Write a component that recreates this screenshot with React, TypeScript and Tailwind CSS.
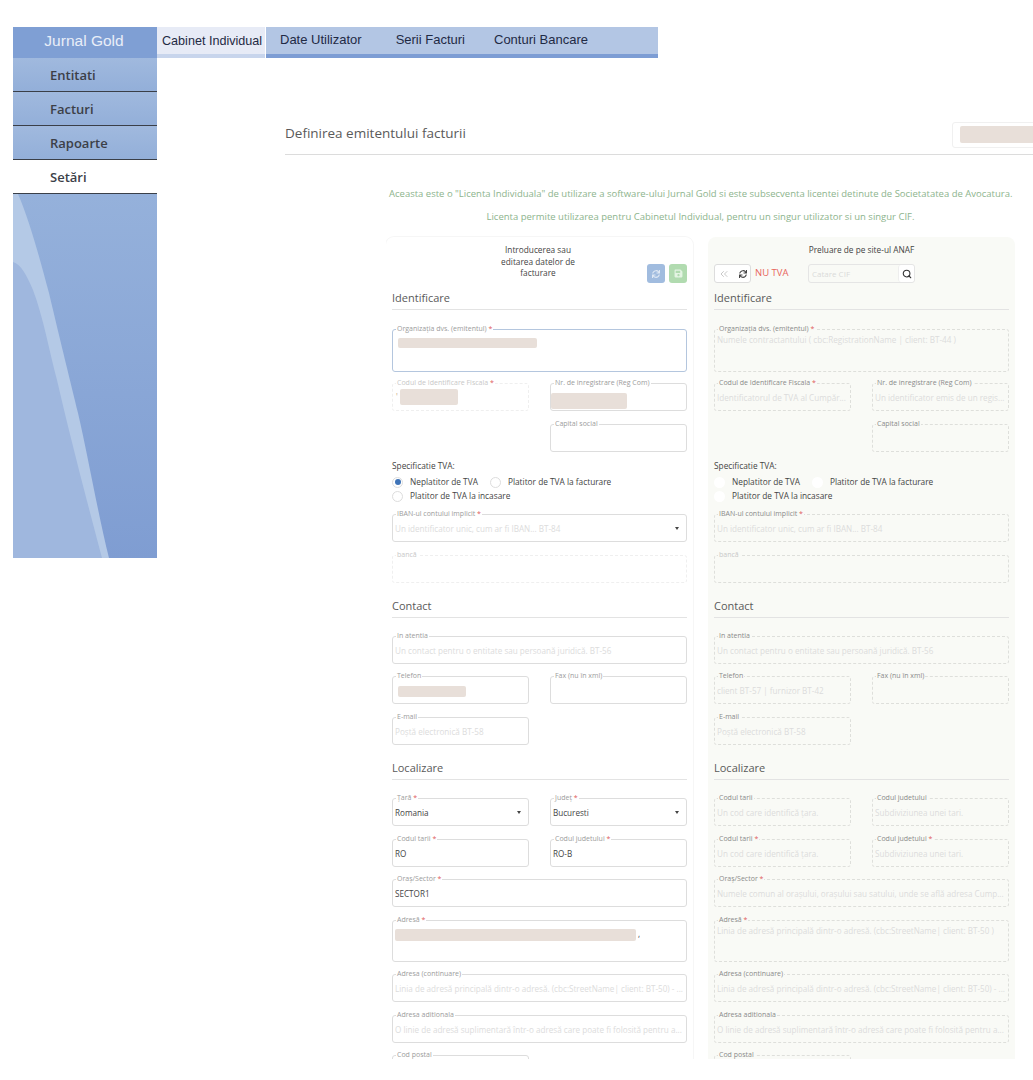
import React from 'react';
import { ChevronsLeft, Search } from 'lucide-react';
import { FaSave, FaSync } from 'react-icons/fa';

const sans = "font-['Open_Sans',sans-serif]";
const arial = "font-['Liberation_Sans',sans-serif]";

const Blob = ({ className }: { className: string }) => (
  <span className={`absolute rounded-[2px] bg-[#e8dfd9] ${className}`} />
);

type FieldProps = {
  label: string;
  required?: boolean;
  value?: string;
  placeholder?: string;
  dashed?: boolean;
  select?: boolean;
  focused?: boolean;
  labelMuted?: boolean;
  tall?: boolean;
  right?: boolean;
  className?: string;
  children?: React.ReactNode;
};

const Field = ({ label, required, value, placeholder, dashed, select, focused, labelMuted, tall, right, className = 'h-[28px]', children }: FieldProps) => {
  const line = dashed ? (right ? 'border-dashed border-[#dedfdb]' : 'border-dashed border-[#efefef]') : focused ? 'border-[#b4c6de]' : 'border-[#dddddd]';
  const labelColor = labelMuted ? 'text-[#c8c8c8]' : right ? 'text-[#8a8a8a]' : 'text-[#9c9c9c]';
  return (
    <div className={`relative rounded-[3px] border px-[2px] text-[8.15px] leading-[14px] ${tall ? 'pt-[3px]' : 'pt-[7px]'} ${sans} ${line} ${className}`}>
      <label className={`absolute -top-[5px] left-[3px] px-px text-[7px] leading-[8px] whitespace-nowrap ${right ? 'bg-[#f9faf6]' : 'bg-white'} ${labelColor}`}>
        {label}
        {required && <span className="text-[#e05a5a]"> *</span>}
      </label>
      {value && <div className="truncate text-[#444444]">{value}</div>}
      {placeholder && <div className="truncate text-[#dcdcdc]">{placeholder}</div>}
      {select && <span className="absolute right-[7px] top-[12px] border-x-[2.5px] border-t-[3px] border-x-transparent border-t-[#444444]" />}
      {children}
    </div>
  );
};

const Section = ({ title, className = '' }: { title: string; className?: string }) => (
  <div className={`border-b border-[#e3e3e3] pb-[4px] text-[11px] leading-[15px] text-[#5a5a5a] ${sans} ${className}`}>{title}</div>
);

const Radio = ({ label, checked, right }: { label: string; checked?: boolean; right?: boolean }) => (
  <span className="flex items-center gap-[7px]">
    <span className={`flex h-[11px] w-[11px] items-center justify-center rounded-full ${right ? 'bg-white' : 'border border-[#dddddd] bg-white'}`}>
      {checked && <span className="h-[6px] w-[6px] rounded-full bg-[#3f74b8]" />}
    </span>
    {label}
  </span>
);

const FormFields = ({ right = false }: { right?: boolean }) => {
  const row = 'grid grid-cols-2 gap-x-[21px]';
  return (
    <div className="px-[6px]">
      <Section title="Identificare" className="mt-[7px]" />
      <Field
        right={right}
        dashed={right}
        focused={!right}
        tall
        required
        label="Organizația dvs. (emitentul)"
        placeholder={right ? 'Numele contractantului ( cbc:RegistrationName | client: BT-44 )' : undefined}
        className="mt-[19px] h-[43px]"
      >
        {!right && <Blob className="left-[5px] top-[8px] h-[10px] w-[139px]" />}
      </Field>
      <div className={`mt-[11px] ${row}`}>
        <Field
          right={right}
          dashed
          required
          labelMuted={!right}
          label="Codul de Identificare Fiscala"
          placeholder={right ? 'Identificatorul de TVA al Cumpăr...' : undefined}
        >
          {!right && (
            <>
              <span className="absolute left-[3px] top-[6px] text-[#c9a98a]">'</span>
              <Blob className="left-[7px] top-[5px] h-[16px] w-[58px]" />
            </>
          )}
        </Field>
        <Field right={right} dashed={right} label="Nr. de inregistrare (Reg Com)" placeholder={right ? 'Un identificator emis de un regis...' : undefined}>
          {!right && <Blob className="left-[0px] top-[9px] h-[16px] w-[76px]" />}
        </Field>
      </div>
      <div className={`mt-[13px] ${row}`}>
        <div />
        <Field right={right} dashed={right} label="Capital social" />
      </div>
      <div className={`mt-[7px] text-[8.3px] leading-[14px] text-[#444444] ${sans}`}>
        <div>Specificatie TVA:</div>
        <div className="mt-[2px] flex gap-[12px]">
          <Radio right={right} checked={!right} label="Neplatitor de TVA" />
          <Radio right={right} label="Platitor de TVA la facturare" />
        </div>
        <Radio right={right} label="Platitor de TVA la incasare" />
      </div>
      <Field
        right={right}
        dashed={right}
        select={!right}
        required
        label="IBAN-ul contului implicit"
        placeholder="Un identificator unic, cum ar fi IBAN... BT-84"
        className="mt-[11px] h-[28px]"
      />
      <Field right={right} dashed labelMuted label="bancă" className="mt-[13px] h-[28px]" />

      <Section title="Contact" className="mt-[15px]" />
      <Field right={right} dashed={right} label="In atentia" placeholder="Un contact pentru o entitate sau persoană juridică. BT-56" className="mt-[18px] h-[28px]" />
      <div className={`mt-[12px] ${row}`}>
        <Field right={right} dashed={right} label="Telefon" placeholder={right ? 'client BT-57 | furnizor BT-42' : undefined}>
          {!right && <Blob className="left-[5px] top-[9px] h-[11px] w-[68px]" />}
        </Field>
        <Field right={right} dashed={right} label="Fax (nu în xml)" />
      </div>
      <div className={`mt-[13px] ${row}`}>
        <Field right={right} dashed={right} label="E-mail" placeholder="Poștă electronică BT-58" />
      </div>

      <Section title="Localizare" className="mt-[15px]" />
      <div className={`mt-[18px] ${row}`}>
        <Field right={right} dashed={right} select={!right} required={!right} label={right ? 'Codul tarii' : 'Țară'} value={right ? undefined : 'Romania'} placeholder={right ? 'Un cod care identifică țara.' : undefined} />
        <Field right={right} dashed={right} select={!right} required={!right} label={right ? 'Codul judetului' : 'Județ'} value={right ? undefined : 'Bucuresti'} placeholder={right ? 'Subdiviziunea unei tari.' : undefined} />
      </div>
      <div className={`mt-[13px] ${row}`}>
        <Field right={right} dashed={right} required label="Codul tarii" value={right ? undefined : 'RO'} placeholder={right ? 'Un cod care identifică țara.' : undefined} />
        <Field right={right} dashed={right} required label="Codul judetului" value={right ? undefined : 'RO-B'} placeholder={right ? 'Subdiviziunea unei tari.' : undefined} />
      </div>
      <Field right={right} dashed={right} required label="Oraș/Sector" value={right ? undefined : 'SECTOR1'} placeholder={right ? 'Numele comun al orașului, orașului sau satului, unde se află adresa Cump...' : undefined} className="mt-[12px] h-[28px]" />
      <Field right={right} dashed={right} tall required label="Adresă" placeholder={right ? 'Linia de adresă principală dintr-o adresă. (cbc:StreetName| client: BT-50 )' : undefined} className="mt-[13px] h-[42px]">
        {!right && (
          <>
            <Blob className="left-[2px] top-[8px] h-[12px] w-[241px]" />
            <span className="absolute left-[245px] top-[6px] text-[#444444]">,</span>
          </>
        )}
      </Field>
      <Field right={right} dashed={right} label="Adresa (continuare)" placeholder="Linia de adresă principală dintr-o adresă. (cbc:StreetName| client: BT-50) - ..." className="mt-[12px] h-[28px]" />
      <Field right={right} dashed={right} label="Adresa aditionala" placeholder="O linie de adresă suplimentară într-o adresă care poate fi folosită pentru a..." className="mt-[13px] h-[28px]" />
      <div className={`mt-[12px] ${row}`}>
        <Field right={right} dashed={right} label="Cod postal" />
      </div>
    </div>
  );
};

const Sidebar = () => (
  <aside className="w-[144px] shrink-0">
    <div className={`flex h-[31px] items-center justify-center bg-[#7f9fd4] pb-[3px] pr-[2px] text-[15.5px] text-[#e9eef8] ${arial}`}>Jurnal Gold</div>
    {['Entitati', 'Facturi', 'Rapoarte', 'Setări'].map((item, i) => (
      <div
        key={item}
        className={`flex h-[34px] items-center border-b border-[#3a3f48] pl-[37px] pt-[2px] text-[13px] font-semibold text-[#3c4048] ${sans} ${i === 3 ? 'bg-white' : 'bg-gradient-to-b from-[#a0b9de] to-[#93afd9]'}`}
      >
        {item}
      </div>
    ))}
    <svg viewBox="0 0 144 364" className="block h-[364px] w-[144px]">
      <defs>
        <linearGradient id="side" x1="0" y1="0" x2="0" y2="1">
          <stop offset="0" stopColor="#95b1db" />
          <stop offset="1" stopColor="#7f9dd2" />
        </linearGradient>
      </defs>
      <rect width="144" height="364" fill="url(#side)" />
      <path d="M0 0H5C18 30 28 70 36 99C48 150 58 190 65 219C75 262 85 320 96 364H0Z" fill="#b4c9e6" />
      <path d="M0 68C8 70 14 82 20 96C30 122 37 160 44 186C56 238 72 300 89 364H0Z" fill="#9fb7de" />
    </svg>
  </aside>
);

const Tabs = () => (
  <nav className={`flex h-[31px] w-[501px] border-b-4 border-[#7d9dd4] bg-[#b3c6e4] text-[13px] text-[#1f2a44] whitespace-nowrap ${arial}`}>
    <div className="-mb-1 h-[31px] w-[109px] border-r border-white bg-gradient-to-b from-[#e7ebf6] from-[87%] to-[#c8d5ec] to-[87%] pl-[5px] pt-[6px] text-[12.6px] leading-[16px]">Cabinet Individual</div>
    <div className="ml-[14px] pt-[5px] leading-[16px]">Date Utilizator</div>
    <div className="ml-[34px] pt-[5px] leading-[16px]">Serii Facturi</div>
    <div className="ml-[29px] pt-[5px] leading-[16px]">Conturi Bancare</div>
  </nav>
);

const App = () => (
  <div className="flex h-[1080px] overflow-hidden bg-white pl-[13px] pt-[27px]">
    <Sidebar />
    <main className="min-w-0 flex-1">
      <Tabs />
      <div className="ml-[128px]">
        <div className={`relative mt-[64px] h-[33px] border-b border-[#dcdcdc] text-[13.5px] leading-[22px] text-[#5a5a5a] ${sans}`}>
          Definirea emitentului facturii
          <div className="absolute left-[667px] top-0 h-[26px] w-[90px] rounded-[3px] border border-[#f0f0f0]">
            <span className="absolute left-[7px] top-[3px] h-[17px] w-[80px] rounded-[2px] bg-[#e8dfd9]" />
          </div>
        </div>
        <div className={`text-[9.5px] text-[#8db48d] ${sans}`}>
          <p className="mt-[32px] ml-[104px] w-[623px] whitespace-nowrap leading-[14px]">
            Aceasta este o "Licenta Individuala" de utilizare a software-ului Jurnal Gold si este subsecventa licentei detinute de Societatatea de Avocatura.
          </p>
          <p className="mt-[9px] ml-[104px] w-[623px] text-center leading-[14px]">
            Licenta permite utilizarea pentru Cabinetul Individual, pentru un singur utilizator si un singur CIF.
          </p>
        </div>
        <div className="ml-[101px] mt-[12px] grid h-[823px] w-[629px] grid-cols-[307px_307px] gap-x-[15px] overflow-hidden pt-px">
          <section className="rounded-t-[8px] bg-white ring-1 ring-[#f6f6f6]">
            <div className="relative h-[46px]">
              <div className={`absolute left-[106px] top-[7px] w-[92px] text-center text-[8.3px] leading-[11.5px] text-[#444444] ${sans}`}>
                Introducerea sau editarea datelor de facturare
              </div>
              <button className="absolute left-[261px] top-[27px] flex h-[19px] w-[18px] items-center justify-center rounded-[3px] bg-[#a1bcdf] text-[#dfe8f4]">
                <FaSync size={8} />
              </button>
              <button className="absolute left-[283px] top-[27px] flex h-[19px] w-[18px] items-center justify-center rounded-[3px] bg-[#b1dbb0] text-[#e4f4e3]">
                <FaSave size={9} />
              </button>
            </div>
            <FormFields />
          </section>
          <section className="rounded-t-[8px] bg-[#f9faf6]">
            <div className="relative h-[46px]">
              <div className={`pt-[7px] text-center text-[8.3px] leading-[11.5px] text-[#444444] ${sans}`}>Preluare de pe site-ul ANAF</div>
              <div className="absolute left-[6px] top-[27px] flex h-[19px] w-[37px] items-center justify-between rounded-[3px] border border-[#dddddd] bg-white px-[3px] text-[#444444]">
                <ChevronsLeft size={12} strokeWidth={1.5} className="text-[#b5b5b5]" />
                <FaSync size={8} />
              </div>
              <span className={`absolute left-[47px] top-[30px] text-[9.5px] leading-[12px] text-[#e8665c] ${sans}`}>NU TVA</span>
              <div className="absolute left-[100px] top-[27px] flex h-[19px] w-[107px] items-center justify-between rounded-[3px] border border-[#e5e5e5] pl-[3px]">
                <span className={`text-[8px] text-[#dadada] ${sans}`}>Catare CIF</span>
                <span className="flex h-full w-[16px] items-center justify-center rounded-[3px] border-l border-[#eeeeee] bg-white text-[#333333]">
                  <Search size={10} strokeWidth={2.6} />
                </span>
              </div>
            </div>
            <FormFields right />
          </section>
        </div>
      </div>
    </main>
  </div>
);

export default App;
